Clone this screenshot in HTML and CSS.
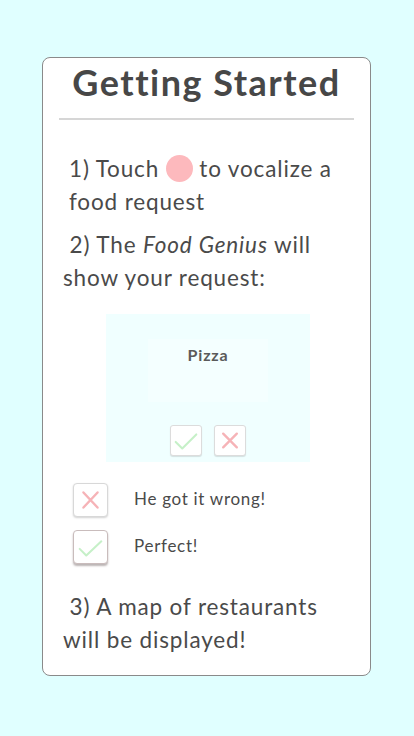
FILE: index.html
```html
<!DOCTYPE html>
<html>
<head>
<meta charset="utf-8">
<link rel="stylesheet" href="styles.css">
</head>
<body>
<div class="card">
  <h1 class="title">Getting Started</h1>
  <div class="rule"></div>
  <p class="step step1">1) Touch <span class="dot"></span> to vocalize a<br>food request</p>
  <p class="step">&nbsp;2) The <em>Food Genius</em> will<br>show your request:</p>
  <div class="demo">
    <div class="bubble">Pizza</div>
    <div class="btns">
      <div class="btn"><svg viewBox="0 0 32 31" width="32" height="31"><path d="M5 17 L12 24 L27 9" fill="none" stroke="#c6f0c8" stroke-width="2.2" stroke-linecap="round" stroke-linejoin="round"/></svg></div>
      <div class="btn"><svg viewBox="0 0 33 31" width="33" height="31"><path d="M9 8 L24 23 M24 8 L9 23" fill="none" stroke="#f6b3b7" stroke-width="2.6" stroke-linecap="round"/></svg></div>
    </div>
  </div>
  <div class="legend">
    <div class="row">
      <div class="lbtn"><svg viewBox="0 0 35 34" width="35" height="34"><path d="M10 9 L25 25 M25 9 L10 25" fill="none" stroke="#f6b3b7" stroke-width="2.6" stroke-linecap="round"/></svg></div>
      <span class="ltext">He got it wrong!</span>
    </div>
    <div class="row">
      <div class="lbtn pressed"><svg viewBox="0 0 35 34" width="35" height="34"><path d="M6 19 L13 26 L29 11" fill="none" stroke="#c6f0c8" stroke-width="2.2" stroke-linecap="round" stroke-linejoin="round"/></svg></div>
      <span class="ltext">Perfect!</span>
    </div>
  </div>
  <p class="step step3">&nbsp;3) A map of restaurants<br>will be displayed!</p>
</div>
</body>
</html>
```
FILE: styles.css
```css
html, body {
  margin: 0;
  padding: 0;
}
body {
  background: #e0ffff;
  font-family: "Lato", "Open Sans", sans-serif;
  color: #4a4a4a;
  width: 414px;
  height: 736px;
  overflow: hidden;
}
.card {
  box-sizing: border-box;
  margin: 57px 0 0 42px;
  width: 329px;
  height: 619px;
  background: #ffffff;
  border: 1px solid #8a8a8a;
  border-radius: 8px;
  padding: 0 16px;
}
.title {
  margin: 2px 0 0 0;
  font-size: 36px;
  font-weight: 700;
  letter-spacing: 1.5px;
  text-align: center;
  line-height: 44px;
  color: #474747;
}
.rule {
  height: 2px;
  background: #d6d6d6;
  margin-top: 14px;
}
.step {
  margin: 0;
  font-size: 22.5px;
  line-height: 32.5px;
  letter-spacing: 0.85px;
  padding-left: 4px;
  white-space: nowrap;
}
.step1 {
  margin-top: 33px;
  padding-left: 10px;
}
.step + .step {
  margin-top: 11px;
}
.dot {
  display: inline-block;
  width: 27px;
  height: 27px;
  border-radius: 50%;
  background: #fdb9bd;
  vertical-align: -5px;
}
.demo {
  width: 204px;
  height: 148px;
  margin: 20px 0 0 47px;
  background: #f0ffff;
  box-sizing: border-box;
  padding-top: 25px;
  display: flex;
  flex-direction: column;
  align-items: center;
}
.bubble {
  width: 120px;
  height: 63px;
  background: #f4ffff;
  font-size: 16px;
  font-weight: 700;
  letter-spacing: 0.8px;
  color: #5a5a5a;
  text-align: center;
  line-height: 32px;
}
.btns {
  display: flex;
  gap: 12px;
  margin-top: 23px;
}
.btn {
  background: #fff;
  border: 1px solid #dcdcdc;
  border-radius: 3px;
  box-shadow: 0 1px 1px rgba(0,0,0,0.12);
  display: flex;
  line-height: 0;
}
.btn svg { display: block; width: 30px; height: 29px; }
.legend {
  margin-top: 21px;
  padding-left: 14px;
  display: flex;
  flex-direction: column;
  gap: 13px;
}
.row {
  display: flex;
  align-items: center;
}
.lbtn {
  width: 35px;
  height: 34px;
  box-sizing: border-box;
  background: #fff;
  border: 1px solid #d8d8d8;
  border-radius: 4px;
  box-shadow: 0 1px 2px rgba(0,0,0,0.18);
  line-height: 0;
}
.lbtn svg { display: block; width: 33px; height: 32px; }
.lbtn.pressed {
  border-color: #c9bcbc;
  box-shadow: 0 2px 2px rgba(60,40,40,0.35);
}
.ltext {
  margin-left: 26px;
  font-size: 17px;
  letter-spacing: 0.7px;
  color: #4a4a4a;
  padding-bottom: 4px;
}
.legend + .step3 {
  margin-top: 27px;
}
```
